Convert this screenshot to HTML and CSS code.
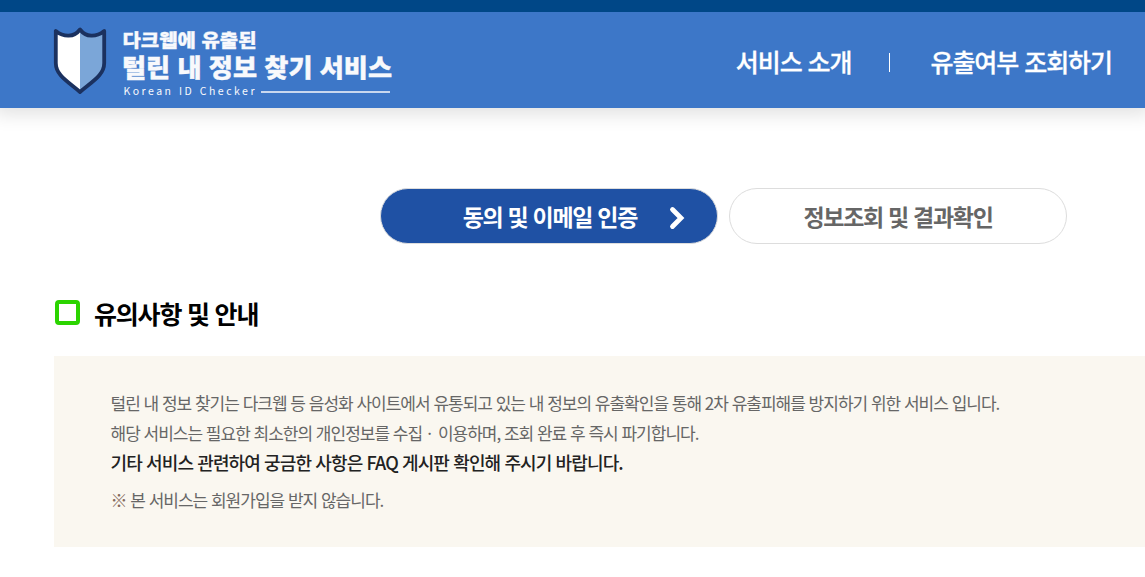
FILE: index.html
```html
<!DOCTYPE html>
<html lang="ko">
<head>
<meta charset="utf-8">
<title>털린 내 정보 찾기 서비스</title>
<link rel="stylesheet" href="styles.css">
</head>
<body>
<div class="topbar"></div>
<header class="header">
  <a class="logo">
    <svg class="shield" width="54" height="70" viewBox="0 0 54 70">
      <path d="M27 4C22 10 11 11 3 5V36C3 49 14 55 27 65Z" fill="#fff"/>
      <path d="M27 4C32 10 43 11 51 5V36C51 49 40 55 27 65Z" fill="#7ba6d8"/>
      <path d="M27 3.500C21 11.500 11 11.500 2.800 5V37C2.800 49 14 55 27 66C40 55 51.200 49 51.200 37V5C43 11.500 33 11.500 27 3.500Z" fill="none" stroke="#1b315f" stroke-width="3.800" stroke-linejoin="round"/>
    </svg>
    <svg class="wordmark" width="272" height="72" viewBox="0 0 272 72">
      <text class="mark-small" x="0.500" y="21" textLength="134" lengthAdjust="spacingAndGlyphs">다크웹에 유출된</text>
      <text class="mark-large" x="0" y="51" textLength="270" lengthAdjust="spacingAndGlyphs">털린 내 정보 찾기 서비스</text>
      <text class="mark-en" x="1.500" y="69" textLength="131" lengthAdjust="spacing">Korean ID Checker</text>
      <path d="M139 66H268" stroke="#f8f9fc" stroke-width="1.700"/>
    </svg>
  </a>
  <nav class="nav">
    <a class="nav-intro">서비스 소개</a>
    <span class="divider"></span>
    <a class="nav-check">유출여부 조회하기</a>
  </nav>
</header>
<main class="main">
  <div class="steps">
    <div class="step active"><span>동의 및 이메일 인증</span>
      <svg class="chevron" width="16" height="24" viewBox="0 0 16 24"><path d="M3.500 3.500L12 12L3.500 20.500" fill="none" stroke="#fff" stroke-width="4.800" stroke-linecap="round"/></svg>
    </div>
    <div class="step"><span>정보조회 및 결과확인</span></div>
  </div>
  <h2 class="title"><span class="square"></span><span>유의사항 및 안내</span></h2>
  <section class="notice">
    <p>털린 내 정보 찾기는 다크웹 등 음성화 사이트에서 유통되고 있는 내 정보의 유출확인을 통해 2차 유출피해를 방지하기 위한 서비스 입니다.</p>
    <p>해당 서비스는 필요한 최소한의 개인정보를 수집<span class="dot"> · </span>이용하며, 조회 완료 후 즉시 파기합니다.</p>
    <p class="strong">기타 서비스 관련하여 궁금한 사항은 FAQ 게시판 확인해 주시기 바랍니다.</p>
    <p class="remark"><span class="mark">※</span> 본 서비스는 회원가입을 받지 않습니다.</p>
  </section>
</main>
</body>
</html>
```
FILE: styles.css
```css
* { box-sizing: border-box; }
body {
  margin: 0;
  height: 577px;
  overflow: hidden;
  background: #fff;
  font-family: "Noto Sans CJK KR", sans-serif;
  white-space: nowrap;
}
p, h2 { margin: 0; }
.topbar { height: 12px; background: #004787; }
.header {
  display: flex;
  justify-content: space-between;
  height: 96px;
  padding: 0 33px 0 53px;
  background: #3d77c8;
  box-shadow: 0 0 18px 6px rgba(0, 0, 0, .12);
  clip-path: inset(0 0 -30px 0);
}
.logo { display: flex; gap: 15px; }
.shield { margin-top: 14px; }
.wordmark { margin-top: 14px; }
.wordmark text { fill: #f8f9fc; stroke: #f8f9fc; }
.mark-small { font-size: 18.5px; font-weight: 900; stroke-width: .3px; }
.mark-large { font-size: 25px; font-weight: 900; stroke-width: .4px; }
.wordmark .mark-en { font-size: 10.5px; font-weight: 400; stroke: none; }
.nav {
  display: flex;
  align-items: center;
  height: 97px;
  color: #fff;
  font-size: 25px;
  font-weight: 500;
  letter-spacing: -1.05px;
  -webkit-text-stroke: .3px #fff;
}
.divider { width: 1px; height: 19px; margin: 3px 40px 0 38px; background: #fff; }
.main { padding: 80px 0 0 54px; }
.steps { display: flex; gap: 11px; margin-left: 326px; }
.step {
  display: flex;
  align-items: center;
  justify-content: center;
  width: 338px;
  height: 56px;
  padding-bottom: 1px;
  border: 1px solid #ddd;
  border-radius: 28px;
  color: #666;
  font-size: 23px;
  font-weight: 700;
  letter-spacing: -1.3px;
}
.step.active { background: #1f51a4; color: #fff; justify-content: flex-end; padding-right: 32px; gap: 32px; }
.chevron { margin-top: 4px; }
.title {
  display: flex;
  align-items: center;
  gap: 14px;
  height: 36px;
  margin-top: 51px;
  padding-left: 1px;
  color: #000;
  font-size: 25px;
  font-weight: 700;
  letter-spacing: -1.2px;
}
.square { width: 25px; height: 25px; margin-bottom: 1px; border: 4.5px solid #2bd400; border-radius: 4px; }
.notice {
  height: 191px;
  margin-top: 25px;
  padding: 32px 0 0 56.5px;
  background: #faf7f0;
  color: #666;
  font-size: 17px;
  line-height: 30px;
  letter-spacing: -1px;
}
.dot { letter-spacing: .5px; }
.strong { margin-top: -1px; color: #222; font-size: 18px; font-weight: 500; letter-spacing: -.88px; }
.remark { margin-top: 8px; }
.mark { color: #84695c; }
```
